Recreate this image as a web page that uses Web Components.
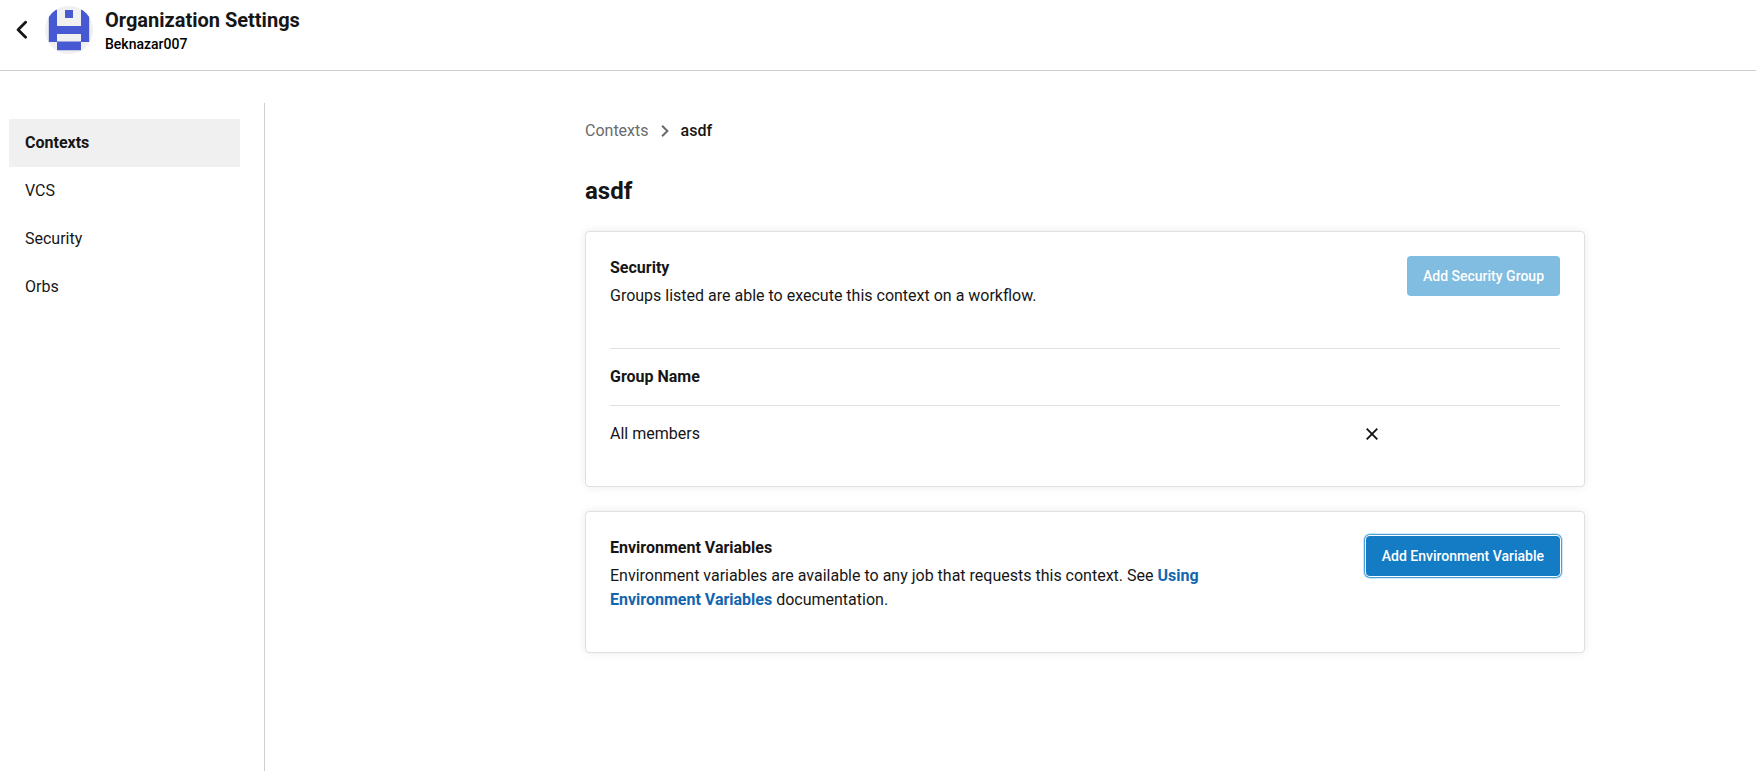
<!DOCTYPE html>
<html lang="en">
<head>
<meta charset="utf-8">
<title>Organization Settings</title>
<style>
html,body{margin:0;height:100%;overflow:hidden}
body{font:400 16px/24px Roboto,sans-serif;color:#161616;background:#fff}
</style>
</head>
<body>
<settings-page></settings-page>
<script>
const define = (name, html) => customElements.define(name, class extends HTMLElement {
  constructor() {
    super();
    this.attachShadow({ mode: 'open' }).innerHTML = html;
  }
});

define('org-avatar', `
<style>:host{display:block;width:48px;height:48px}svg{display:block;border-radius:50%}</style>
<svg width="48" height="48" viewBox="0 0 48 48">
<rect width="48" height="48" fill="#f0f0f0"/>
<path fill="#4758d3" d="M3.8 3.8h8.2v16.2h24V3.8h8.2v32.2h-8.2v8.2H12v-8.2H3.8z M20 4h8v8h-8z"/>
<path fill="#f0f0f0" d="M12 28h24v7.4H12z"/>
</svg>`);

define('page-header', `
<style>
:host{display:flex;align-items:flex-start;box-sizing:border-box;height:71px;padding:6px 0 0 16px;border-bottom:1px solid #cfcfcf}
.back{display:block;width:11px;height:20px;margin:14px 18px 0 0}
.text{margin:2px 0 0 12px}
.title{font-size:20px;line-height:24px;font-weight:700}
.sub{font-size:14px;line-height:24px;font-weight:500;color:#000}
</style>
<svg class="back" viewBox="0 0 11 20" fill="none" stroke="#161616" stroke-width="2.8" stroke-linecap="round" stroke-linejoin="round"><path d="M9.6 2.3 2.1 9.8l7.5 7.5"/></svg>
<org-avatar></org-avatar>
<div class="text"><div class="title"><slot name="title"></slot></div><div class="sub"><slot name="name"></slot></div></div>`);

define('nav-item', `
<style>
:host{display:block;padding:12px 16px;line-height:24px}
:host([active]){background:#f0f0f0;font-weight:700}
</style><slot></slot>`);

define('side-nav', `
<style>:host{display:block;box-sizing:border-box;width:265px;padding:16px 24px 0 9px;border-right:1px solid #cfcfcf}</style><slot></slot>`);

define('bread-crumb', `
<style>
:host{display:flex;align-items:center;line-height:24px}
svg{display:block;margin:0 12px}
.parent{color:#6a6a6a}.here{font-weight:500}
</style>
<span class="parent"><slot name="parent"></slot></span>
<svg width="8" height="14" viewBox="0 0 8 14" fill="none" stroke="#6a6a6a" stroke-width="2"><path d="M1.1 1.7 6.4 7 1.1 12.3"/></svg>
<span class="here"><slot></slot></span>`);

define('action-button', `
<style>
:host{display:block;flex:none}
button{display:block;height:40px;border:0;border-radius:4px;padding:0 16px;background:#147bc5;color:#fff;font:500 14px/40px Roboto,sans-serif}
:host([disabled]) button{background:#81bce1}
:host([focused]) button{box-shadow:0 0 0 1px #fff,0 0 0 2px #4a9fd9,0 0 0 3px #cce7f7}
</style><button><slot></slot></button>`);

define('close-icon', `
<style>:host{display:block;width:12px;height:12px}svg{display:block}</style>
<svg width="12" height="12" viewBox="0 0 12 12" fill="none" stroke="#161616" stroke-width="1.9"><path d="M.7.7l10.6 10.6M11.3.7.7 11.3"/></svg>`);

define('info-card', `
<style>
:host{display:block;padding:24px;border:1px solid #e0e0e0;border-radius:4px;background:#fff;box-shadow:0 0 10px rgba(0,0,0,.08)}
header{display:flex;justify-content:space-between;align-items:flex-start}
.copy{width:600px;padding-bottom:16px}
.title{font-weight:700;margin-bottom:4px}
</style>
<header><div class="copy"><div class="title"><slot name="title"></slot></div><div><slot name="description"></slot></div></div><slot name="action"></slot></header>
<slot></slot>`);

define('group-table', `
<style>
:host{display:block;margin-top:24px}
.row{display:grid;grid-template-columns:756px 1fr;align-items:center;border-top:1px solid #e0e0e0;padding:16px 0}
.head{font-weight:700}
</style>
<div class="row head"><slot name="head"></slot></div>
<div class="row"><slot></slot><close-icon></close-icon></div>`);

define('settings-page', `
<style>
:host{display:flex;flex-direction:column;height:100vh}
.body{display:flex;flex:1;margin-top:32px}
main{width:1000px;margin-left:320px;padding-top:16px}
h1{margin:30px 0 22px;font-size:24px;line-height:36px;font-weight:700}
info-card+info-card{margin-top:24px}
a{color:#1266af;font-weight:700}
</style>
<page-header><span slot="title">Organization Settings</span><span slot="name">Beknazar007</span></page-header>
<div class="body">
<side-nav><nav-item active>Contexts</nav-item><nav-item>VCS</nav-item><nav-item>Security</nav-item><nav-item>Orbs</nav-item></side-nav>
<main>
<bread-crumb><span slot="parent">Contexts</span>asdf</bread-crumb>
<h1>asdf</h1>
<info-card><span slot="title">Security</span><span slot="description">Groups listed are able to execute this context on a workflow.</span><action-button slot="action" disabled>Add Security Group</action-button>
<group-table><span slot="head">Group Name</span><span>All members</span></group-table></info-card>
<info-card><span slot="title">Environment Variables</span><span slot="description">Environment variables are available to any job that requests this context. See <a>Using Environment Variables</a> documentation.</span><action-button slot="action" focused>Add Environment Variable</action-button></info-card>
</main>
</div>`);
</script>
</body>
</html>
